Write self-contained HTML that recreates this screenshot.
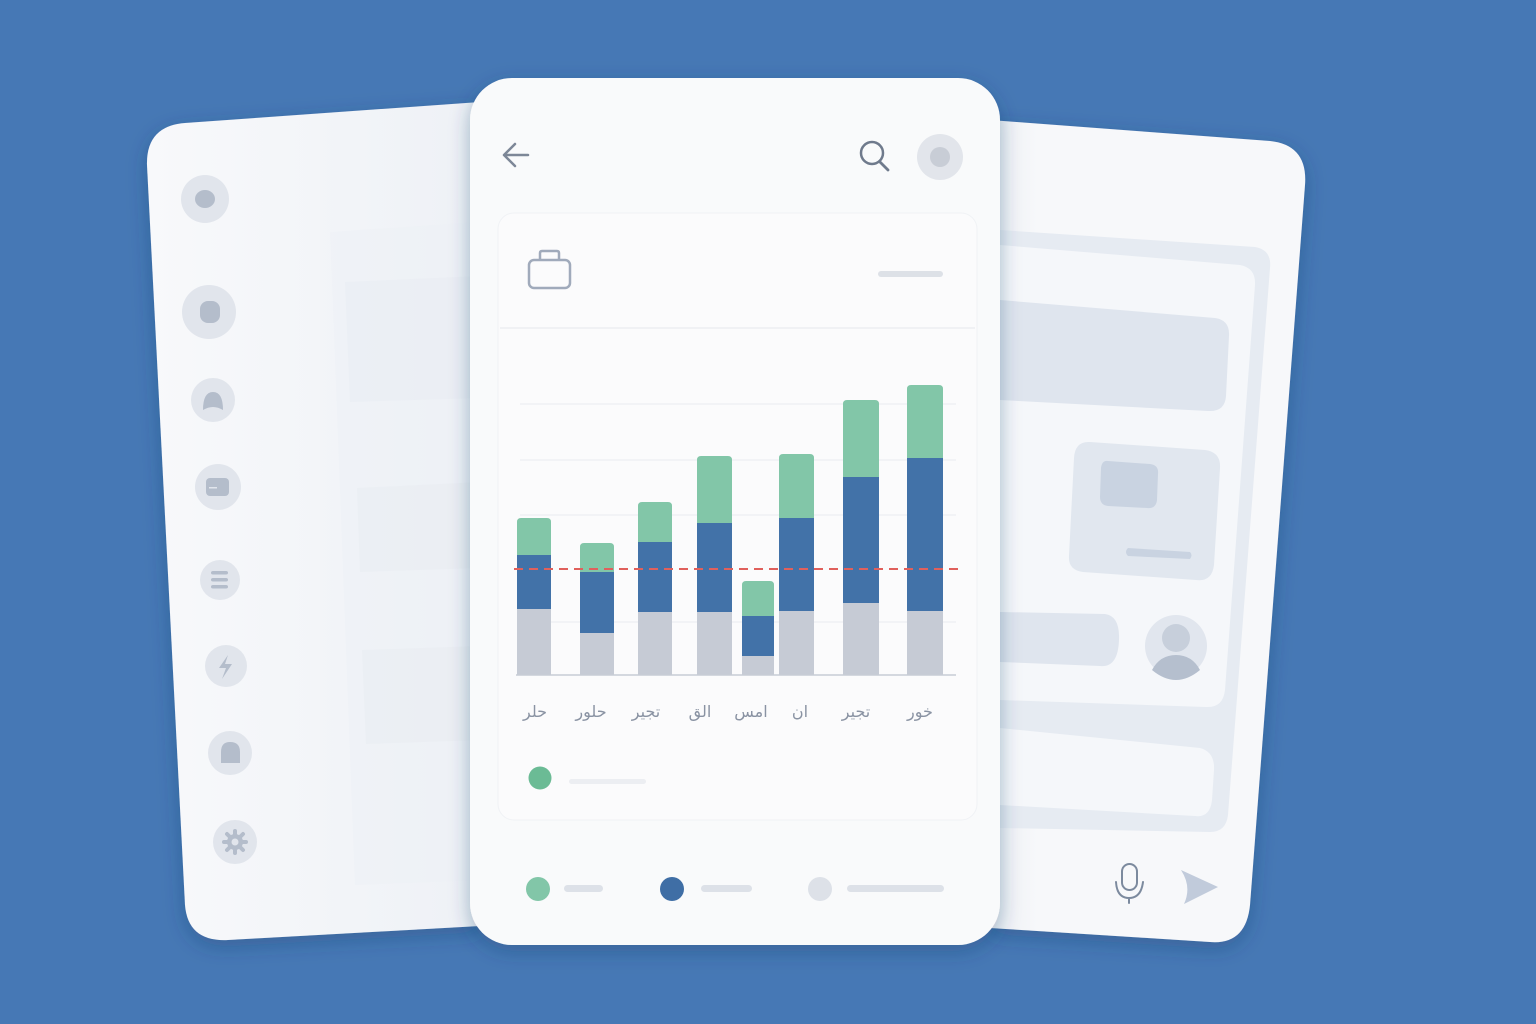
<!DOCTYPE html>
<html><head><meta charset="utf-8"><style>
html,body{margin:0;padding:0;width:1536px;height:1024px;overflow:hidden;background:#4678b5}
svg{display:block}
</style></head><body>
<svg width="1536" height="1024" viewBox="0 0 1536 1024" xmlns="http://www.w3.org/2000/svg">
<defs>
<filter id="sh" x="-20%" y="-20%" width="140%" height="140%"><feDropShadow dx="0" dy="6" stdDeviation="10" flood-color="#1c3a66" flood-opacity="0.35"/></filter>
<linearGradient id="lg" x1="0" x2="1"><stop offset="0" stop-color="#f8f9fb"/><stop offset="1" stop-color="#eef1f6"/></linearGradient>
<linearGradient id="rg" x1="0" x2="1"><stop offset="0" stop-color="#eceff4"/><stop offset="0.15" stop-color="#f7f8fa"/><stop offset="1" stop-color="#f7f8fa"/></linearGradient>
</defs>
<rect width="1536" height="1024" fill="#4678b5"/>
<!-- left card -->
<path d="M185 123 L480 102 L480 926 L228 940 Q188 942 185 905 L147 165 Q146 126 185 123 Z" fill="url(#lg)" filter="url(#sh)"/>
<path d="M330 232 L480 222 L480 880 L355 885 Z" fill="#edf0f5" opacity="0.55"/>
<path d="M345 282 L480 276 L480 398 L350 402 Z" fill="#e6eaf1" opacity="0.45"/>
<path d="M357 488 L480 482 L480 568 L360 572 Z" fill="#e6eaf1" opacity="0.4"/>
<path d="M362 650 L480 646 L480 740 L366 744 Z" fill="#e6eaf1" opacity="0.4"/>
<g fill="#e1e5ec">
<ellipse cx="205" cy="199" rx="24" ry="24"/><ellipse cx="209" cy="312" rx="27" ry="27"/>
<ellipse cx="213" cy="400" rx="22" ry="22"/><ellipse cx="218" cy="487" rx="23" ry="23"/>
<ellipse cx="220" cy="580" rx="20" ry="20"/><ellipse cx="226" cy="666" rx="21" ry="21"/>
<ellipse cx="230" cy="753" rx="22" ry="22"/><ellipse cx="235" cy="842" rx="22" ry="22"/>
</g>
<g fill="#b4bdcb">
<ellipse cx="205" cy="199" rx="10" ry="9"/>
<rect x="200" y="301" width="20" height="22" rx="8"/>
<path d="M203 410 Q203 392 213 392 Q223 392 223 410 Q213 404 203 410Z"/>
<rect x="206" y="478" width="23" height="18" rx="4"/>
<rect x="211" y="571" width="17" height="3.5" rx="2"/><rect x="211" y="578" width="17" height="3.5" rx="2"/><rect x="211" y="585" width="17" height="3.5" rx="2"/>
<path d="M228 655 L219 668 L226 668 L222 679 L232 664 L225 664 Z"/>
<path d="M221 763 L221 752 Q221 742 230 742 Q240 742 240 752 L240 763 Z"/>
<circle cx="235" cy="842" r="8"/>
<g stroke="#b4bdcb" stroke-width="4" stroke-linecap="round">
<line x1="235" y1="831" x2="235" y2="853"/><line x1="224" y1="842" x2="246" y2="842"/>
<line x1="227" y1="834" x2="243" y2="850"/><line x1="243" y1="834" x2="227" y2="850"/>
</g>
</g>
<circle cx="235" cy="842" r="3.5" fill="#e1e5ec"/>
<rect x="209" y="487" width="8" height="1.5" fill="#e1e5ec"/>
<!-- right card -->
<path d="M990 120 L1270 141 Q1308 145 1305 185 L1250 905 Q1246 945 1210 942 L990 928 Z" fill="url(#rg)" filter="url(#sh)"/>
<path d="M1000 230 L1255 247 Q1272 250 1270 268 L1228 815 Q1226 832 1210 832 L1000 828 Z" fill="#e6ebf2"/>
<path d="M1000 245 L1240 265 Q1256 268 1255 285 L1225 690 Q1223 708 1206 707 L1000 700 Z" fill="#f5f7fa"/>
<path d="M1000 300 L1215 318 Q1230 320 1229 336 L1226 396 Q1225 412 1208 411 L1000 400 Z" fill="#dfe5ee"/>
<path d="M1090 442 L1205 450 Q1221 452 1220 468 L1214 565 Q1212 582 1196 580 L1083 572 Q1068 570 1069 556 L1074 458 Q1075 441 1090 442 Z" fill="#e1e7ef"/>
<path d="M1108 461 L1150 464 Q1159 465 1158 474 L1157 500 Q1156 509 1147 508 L1108 506 Q1100 505 1100 497 L1101 468 Q1102 460 1108 461 Z" fill="#c9d3e1"/>
<path d="M1128 548 L1190 552 Q1193 555 1190 559 L1128 556 Q1124 552 1128 548 Z" fill="#c9d3e1"/>
<path d="M1000 612 L1105 614 Q1120 616 1119 640 Q1118 668 1100 666 L1000 662 Z" fill="#dfe5ee"/>
<circle cx="1176" cy="646" r="31" fill="#e1e6ee"/>
<circle cx="1176" cy="638" r="14" fill="#c7cfdb"/>
<path d="M1152 670 Q1160 655 1176 655 Q1192 655 1200 670 Q1188 680 1176 680 Q1164 680 1152 670 Z" fill="#b5bfce"/>
<path d="M1000 728 L1200 748 Q1215 752 1214 770 L1212 800 Q1210 818 1195 816 L1000 805 Z" fill="#f5f7fa"/>
<g fill="none" stroke="#7c8a9e" stroke-width="2" stroke-linecap="round">
<rect x="1122" y="864" width="15" height="26" rx="7.5"/>
<path d="M1116 882 Q1117 898 1129 898 Q1141 898 1143 882 M1129 898 L1129 903"/>
</g>
<path d="M1181 870 L1218 887 L1184 904 Q1192 887 1181 870 Z" fill="#c1cbdb"/>
<!-- center card -->
<rect x="470" y="78" width="530" height="867" rx="42" fill="#f9fafb" filter="url(#sh)"/>
<path d="M528 155 L504 155 M515 144 L504 155 L515 166" fill="none" stroke="#7d8797" stroke-width="2.5" stroke-linecap="round" stroke-linejoin="round"/>
<circle cx="872" cy="153" r="11" fill="none" stroke="#6f7a8c" stroke-width="2.5"/>
<path d="M880 162 L888 170" stroke="#6f7a8c" stroke-width="2.8" stroke-linecap="round"/>
<circle cx="940" cy="157" r="23" fill="#e2e5eb"/><circle cx="940" cy="157" r="10" fill="#c8cdd6"/>
<rect x="498" y="213" width="479" height="607" rx="16" fill="#fbfbfc"/>
<rect x="498" y="213" width="479" height="607" rx="16" fill="none" stroke="#f0f2f5" stroke-width="1"/>
<line x1="500" y1="328" x2="975" y2="328" stroke="#eceef2" stroke-width="1.5"/>
<rect x="529" y="260" width="41" height="28" rx="5" fill="none" stroke="#a0aabb" stroke-width="2.5"/>
<path d="M540 260 L540 253 Q540 251 542 251 L557 251 Q559 251 559 253 L559 260" fill="none" stroke="#a0aabb" stroke-width="2.5"/>
<rect x="878" y="271" width="65" height="6" rx="3" fill="#dde1e7"/>
<g stroke="#eceef2" stroke-width="1.2">
<line x1="520" y1="404" x2="956" y2="404"/><line x1="520" y1="460" x2="956" y2="460"/>
<line x1="520" y1="515" x2="956" y2="515"/><line x1="520" y1="622" x2="956" y2="622"/>
</g>
<g>
<path d="M517 675 V522 Q517 518 521 518 H547 Q551 518 551 522 V675Z" fill="#82c6a8"/>
<rect x="517" y="555" width="34" height="54" fill="#4272a8"/><rect x="517" y="609" width="34" height="66" fill="#c6cbd5"/>
<path d="M580 675 V547 Q580 543 584 543 H610 Q614 543 614 547 V675Z" fill="#82c6a8"/>
<rect x="580" y="572" width="34" height="61" fill="#4272a8"/><rect x="580" y="633" width="34" height="42" fill="#c6cbd5"/>
<path d="M638 675 V506 Q638 502 642 502 H668 Q672 502 672 506 V675Z" fill="#82c6a8"/>
<rect x="638" y="542" width="34" height="70" fill="#4272a8"/><rect x="638" y="612" width="34" height="63" fill="#c6cbd5"/>
<path d="M697 675 V460 Q697 456 701 456 H728 Q732 456 732 460 V675Z" fill="#82c6a8"/>
<rect x="697" y="523" width="35" height="89" fill="#4272a8"/><rect x="697" y="612" width="35" height="63" fill="#c6cbd5"/>
<path d="M742 675 V585 Q742 581 746 581 H770 Q774 581 774 585 V675Z" fill="#82c6a8"/>
<rect x="742" y="616" width="32" height="40" fill="#4272a8"/><rect x="742" y="656" width="32" height="19" fill="#c6cbd5"/>
<path d="M779 675 V458 Q779 454 783 454 H810 Q814 454 814 458 V675Z" fill="#82c6a8"/>
<rect x="779" y="518" width="35" height="93" fill="#4272a8"/><rect x="779" y="611" width="35" height="64" fill="#c6cbd5"/>
<path d="M843 675 V404 Q843 400 847 400 H875 Q879 400 879 404 V675Z" fill="#82c6a8"/>
<rect x="843" y="477" width="36" height="126" fill="#4272a8"/><rect x="843" y="603" width="36" height="72" fill="#c6cbd5"/>
<path d="M907 675 V389 Q907 385 911 385 H939 Q943 385 943 389 V675Z" fill="#82c6a8"/>
<rect x="907" y="458" width="36" height="153" fill="#4272a8"/><rect x="907" y="611" width="36" height="64" fill="#c6cbd5"/>
</g>
<line x1="514" y1="569" x2="958" y2="569" stroke="#e0605c" stroke-width="2" stroke-dasharray="9 6"/>
<line x1="516" y1="675" x2="956" y2="675" stroke="#c7ccd5" stroke-width="1.5"/>
<g font-family="'DejaVu Sans', sans-serif" font-size="16" fill="#8a93a3" text-anchor="middle" direction="rtl">
<text x="535" y="717">حلر</text><text x="591" y="717">حلور</text><text x="646" y="717">تجير</text>
<text x="700" y="717">الق</text><text x="751" y="717">امس</text><text x="800" y="717">ان</text>
<text x="856" y="717">تجير</text><text x="920" y="717">خور</text>
</g>
<circle cx="540" cy="778" r="11.5" fill="#6bbb95"/>
<rect x="569" y="779" width="77" height="5" rx="2.5" fill="#eceef2"/>
<circle cx="538" cy="889" r="12" fill="#82c6a8"/><rect x="564" y="885" width="39" height="7" rx="3.5" fill="#dde1e8"/>
<circle cx="672" cy="889" r="12" fill="#3f6ea5"/><rect x="701" y="885" width="51" height="7" rx="3.5" fill="#dde1e8"/>
<circle cx="820" cy="889" r="12" fill="#dde1e8"/><rect x="847" y="885" width="97" height="7" rx="3.5" fill="#dde1e8"/>
</svg>
</body></html>
